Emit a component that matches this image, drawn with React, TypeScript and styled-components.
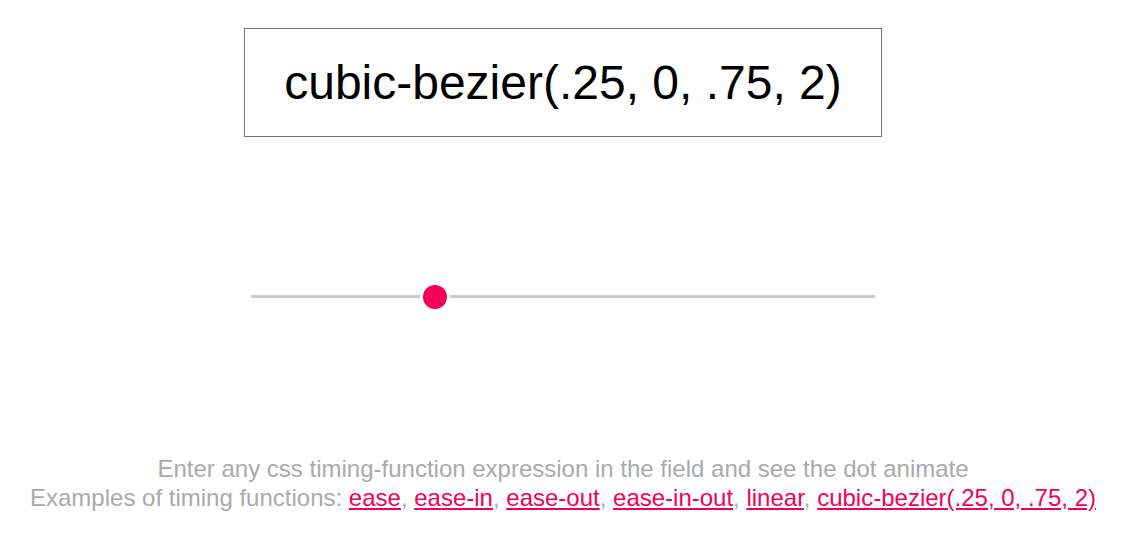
import React, {useState} from 'react';
import styled, {createGlobalStyle} from 'styled-components';

const GlobalStyle = createGlobalStyle`
    body {
        margin: 0;
        background: #fff;
        font-family: "Liberation Sans", Arial, sans-serif;
    }
`;

const Page = styled.div`
    display: flex;
    flex-direction: column;
    align-items: center;
    padding-top: 28px;
`;

const Field = styled.input`
    box-sizing: border-box;
    width: 638px;
    height: 109px;
    border: 1px solid #767676;
    border-radius: 0;
    font-family: "Liberation Sans", Arial, sans-serif;
    font-size: 48px;
    text-align: center;
    color: #000;
    outline: none;
    padding: 0;
`;

const Track = styled.div`
    position: relative;
    width: 624px;
    height: 3px;
    margin-top: 158px;
    background: #cccccc;
`;

const Dot = styled.div`
    position: absolute;
    top: 50%;
    width: 24px;
    height: 24px;
    margin-left: -12px;
    margin-top: -12px;
    border-radius: 50%;
    background: #f50057;
    box-shadow: 0 0 0 3px #fff;
`;

const Help = styled.div`
    margin-top: 156px;
    font-size: 24px;
    line-height: 29px;
    color: #aaaaaa;
    text-align: center;
`;

const Example = styled.a`
    color: #f50057;
    text-decoration: underline;
    cursor: pointer;
`;

const examples = ['ease', 'ease-in', 'ease-out', 'ease-in-out', 'linear', 'cubic-bezier(.25, 0, .75, 2)'];

export default function App() {
    const [timing, setTiming] = useState('cubic-bezier(.25, 0, .75, 2)');

    return (
        <Page>
            <GlobalStyle />
            <Field value={timing} onChange={e => setTiming(e.target.value)} />
            <Track>
                <Dot style={{left: '29.5%'}} />
            </Track>
            <Help>
                <div>Enter any css timing-function expression in the field and see the dot animate</div>
                <div>
                    Examples of timing functions:{' '}
                    {examples.map((ex, i) => (
                        <React.Fragment key={ex}>
                            <Example onClick={() => setTiming(ex)}>{ex}</Example>
                            {i < examples.length - 1 ? ', ' : ''}
                        </React.Fragment>
                    ))}
                </div>
            </Help>
        </Page>
    );
}
